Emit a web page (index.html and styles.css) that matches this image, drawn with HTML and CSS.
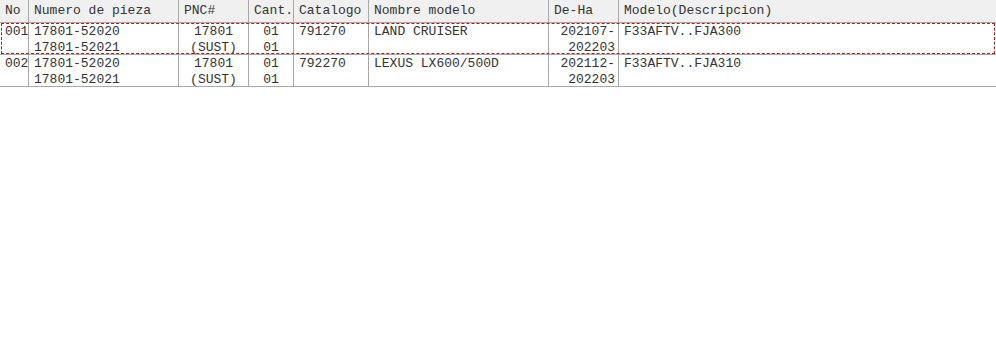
FILE: index.html
```html
<!DOCTYPE html>
<html>
<head>
<meta charset="utf-8">
<link rel="stylesheet" href="styles.css">
</head>
<body>
<div class="grid">
  <div class="row head">
    <div class="cell">No</div>
    <div class="cell">Numero de pieza</div>
    <div class="cell">PNC#</div>
    <div class="cell">Cant.</div>
    <div class="cell">Catalogo</div>
    <div class="cell">Nombre modelo</div>
    <div class="cell">De-Ha</div>
    <div class="cell last">Modelo(Descripcion)</div>
  </div>
  <div class="row data focused">
    <div class="cell">001</div>
    <div class="cell">17801-52020<br>17801-52021</div>
    <div class="cell center">17801<br>(SUST)</div>
    <div class="cell center">01<br>01</div>
    <div class="cell">791270</div>
    <div class="cell">LAND CRUISER</div>
    <div class="cell right">202107-<br>202203</div>
    <div class="cell last">F33AFTV..FJA300</div>
  </div>
  <div class="row data">
    <div class="cell">002</div>
    <div class="cell">17801-52020<br>17801-52021</div>
    <div class="cell center">17801<br>(SUST)</div>
    <div class="cell center">01<br>01</div>
    <div class="cell">792270</div>
    <div class="cell">LEXUS LX600/500D</div>
    <div class="cell right">202112-<br>202203</div>
    <div class="cell last">F33AFTV..FJA310</div>
  </div>
</div>
</body>
</html>
```
FILE: styles.css
```css
html, body {
  margin: 0;
  padding: 0;
  background: #ffffff;
}
body {
  font-family: "Liberation Mono", "Courier New", monospace;
  font-size: 13px;
  color: #333333;
}
.grid {
  width: 996px;
}
.row {
  display: grid;
  grid-template-columns: 29px 150px 70px 45px 75px 180px 70px 1fr;
  border-bottom: 1px solid #a8a8a8;
  position: relative;
}
.row.head {
  background: #f0f0f0;
  height: 23px;
  box-sizing: border-box;
}
.row.data {
  height: 32px;
  box-sizing: border-box;
}
.cell {
  box-sizing: border-box;
  border-right: 1px solid #a8a8a8;
  padding: 0 4px 0 5px;
  white-space: nowrap;
  overflow: hidden;
}
.head .cell {
  line-height: 22px;
}
.data .cell {
  line-height: 16px;
  padding-top: 1px;
}
.cell.last {
  border-right: none;
}
.data .cell.center {
  text-align: center;
  padding-left: 2px;
  padding-right: 2px;
}
.data .cell.right {
  text-align: right;
  padding-right: 3px;
}
.focused::after {
  content: "";
  position: absolute;
  left: 1px;
  top: 0;
  right: 1px;
  bottom: 0;
  border: 1px dashed #b01c1c;
  pointer-events: none;
}
```
